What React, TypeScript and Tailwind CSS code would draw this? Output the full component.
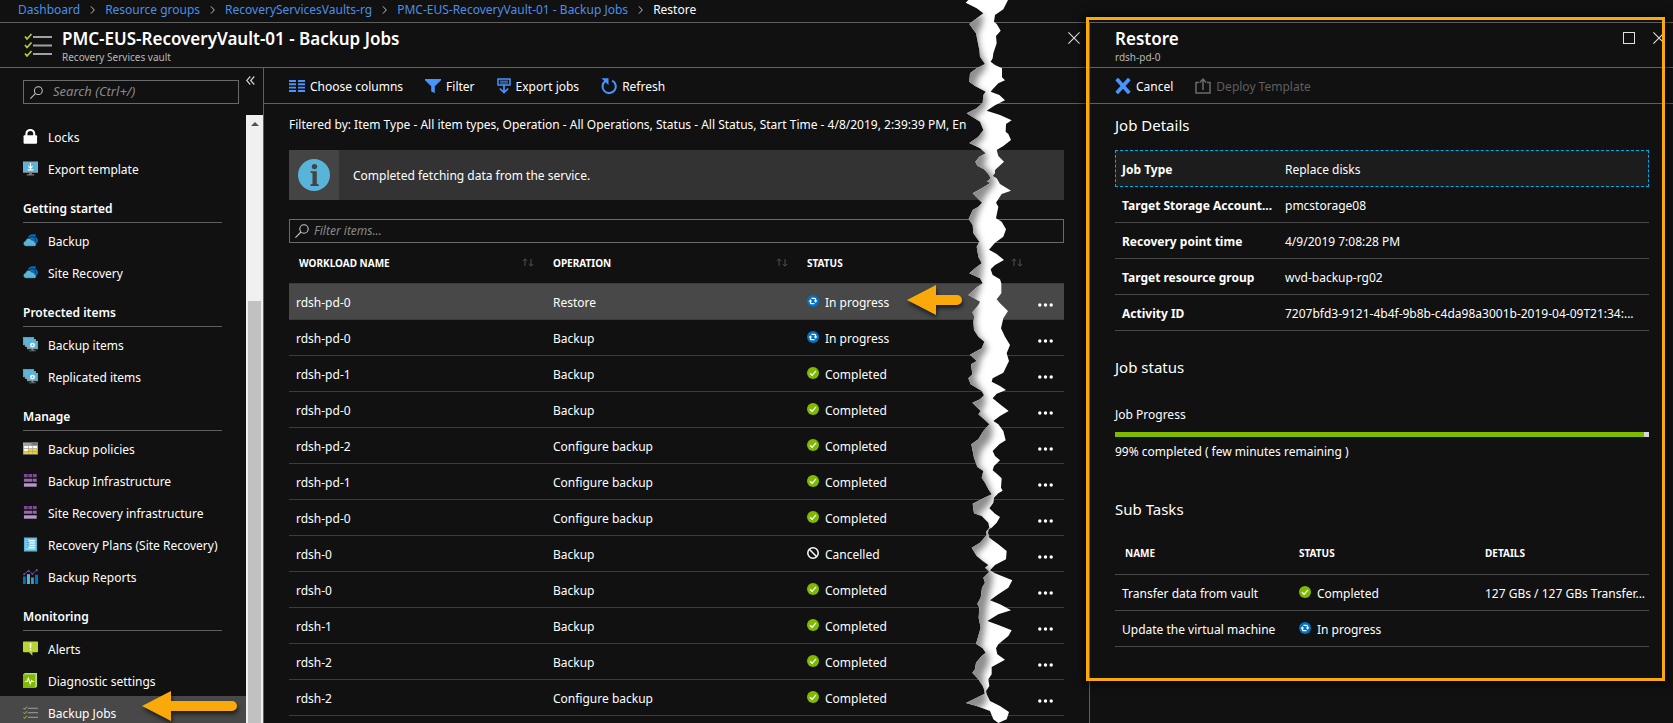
import type { ReactNode } from "react";

type IconProps = { className?: string };

/* ---------- icons ---------- */

function ChecklistIcon({ className }: IconProps) {
  return (
    <svg viewBox="0 0 28 24" className={className} fill="none" aria-hidden="true">
      <path d="M9 4h19M9 12.500h19M9 21h19" stroke="#a0a1a2" strokeWidth="2" />
      <path d="M1 3.500l2 2.500 4.500-5M1 12l2 2.500 4.500-5M1 20.500l2 2.500 4.500-5" stroke="#b8d432" strokeWidth="1.600" />
    </svg>
  );
}

function SearchIcon({ className }: IconProps) {
  return (
    <svg viewBox="0 0 14 14" className={className} fill="none" stroke="#c8c8c8" strokeWidth="1.100" aria-hidden="true">
      <circle cx="9" cy="5" r="4.200" />
      <path d="M6 8L.4 13.600" />
    </svg>
  );
}

function LockIcon({ className }: IconProps) {
  return (
    <svg viewBox="0 0 16 16" className={className} aria-hidden="true">
      <path d="M3.600 8V5.200a4.200 4.200 0 0 1 8.400 0V8" fill="none" stroke="#fff" strokeWidth="2.200" />
      <rect x=".6" y="6.600" width="14.400" height="9" rx="1" fill="#fff" />
    </svg>
  );
}

function ExportTemplateIcon({ className }: IconProps) {
  return (
    <svg viewBox="0 0 16 16" className={className} aria-hidden="true">
      <rect x="0" y=".5" width="16" height="12" fill="#a0a1a2" />
      <rect x="1" y="1.500" width="14" height="10" fill="#59b4d9" />
      <path d="M6.500 12.500h3V14H12v1.500H4V14h2.500z" fill="#7a7a7a" />
      <path d="M8 2v5.500M5.800 5.500L8 7.800l2.200-2.300M5 9.500h6" stroke="#fff" strokeWidth="1.200" fill="none" />
    </svg>
  );
}

function CloudBackupIcon({ className }: IconProps) {
  return (
    <svg viewBox="0 0 16 16" className={className} aria-hidden="true">
      <path d="M5 5C6 2.500 8 1.200 10.500 1.300L14 1.600l-1.200 2.200C15 5 16 7 16 8.500L13.600 12 9 8z" fill="#0072c6" />
      <path d="M5.500 5.200l4-1.600 3.300 1.400 1 3.600" stroke="#111" strokeWidth=".7" fill="none" />
      <path d="M3 14.200a2.900 2.900 0 0 1-.5-5.700 3.700 3.700 0 0 1 6.800-1 3.200 3.200 0 0 1 3.400 2.600 2.100 2.100 0 0 1-.5 4.100z" fill="#59b4d9" stroke="#111" strokeWidth=".5" />
    </svg>
  );
}

function ServersIcon({ className }: IconProps) {
  return (
    <svg viewBox="0 0 16 16" className={className} aria-hidden="true">
      <rect x=".4" y=".6" width="11" height="7.600" fill="#59b4d9" stroke="#a0a1a2" strokeWidth=".8" />
      <rect x="2.400" y="2.600" width="11" height="7.600" fill="#59b4d9" stroke="#a0a1a2" strokeWidth=".8" />
      <rect x="4.600" y="4.600" width="11" height="8" fill="#59b4d9" stroke="#a0a1a2" strokeWidth=".8" />
      <path d="M9 12.800h2.400v1.500h2.400v1H6.600v-1H9z" fill="#7a7a7a" />
      <circle cx="10.100" cy="8.600" r="2.600" fill="#fff" />
      <path d="M10.100 7.200l1.300 2.300H8.800z" fill="#59b4d9" />
    </svg>
  );
}

function PolicyIcon({ className }: IconProps) {
  return (
    <svg viewBox="0 0 16 16" className={className} aria-hidden="true">
      <rect x="0" y="1.500" width="16" height="13" fill="#a0a1a2" />
      <path d="M9 1.500h7v3h-7z" fill="#7a7a7a" />
      <path d="M1.200 5.200h4v2.600h-4zM6 5.200h4v2.600H6zM1.200 8.400h4V11h-4zM10.800 5.200h4v2.600h-4z" fill="#fff" />
      <path d="M6 8.400h4V11H6zM10.800 8.400h4V11h-4zM1.200 11.600h4v2.200h-4zM6 11.600h4v2.200H6zM10.800 11.600h4v2.200h-4z" fill="#fcd116" />
    </svg>
  );
}

function InfrastructureIcon({ className }: IconProps) {
  return (
    <svg viewBox="0 0 16 16" className={className} aria-hidden="true">
      <path d="M1 1h4v3.400H1zM5.800 1h4v3.400h-4zM10.600 1h4v3.400h-4z" fill="#804998" />
      <path d="M1 6h9v3.400H1zM10.600 6h4v3.400h-4z" fill="#9a62b5" />
      <path d="M1 11h13.600v3.600H1z" fill="#b796c9" />
    </svg>
  );
}

function PlansIcon({ className }: IconProps) {
  return (
    <svg viewBox="0 0 16 16" className={className} aria-hidden="true">
      <rect x="1" y=".5" width="14" height="15" fill="#59b4d9" />
      <rect x="2.500" y="2" width="11" height="12" fill="#8fd0ea" />
      <path d="M3.500 3.500h1.600M3.500 6h1.600M3.500 8.500h1.600M3.500 11h1.600" stroke="#3a9ccb" strokeWidth="1" />
      <path d="M6 4h6.500M7 6.500h5.500M7 9h5.500M6 11.500h6.500" stroke="#fff" strokeWidth="1.100" />
      <path d="M4.500 5.200l2 1.300M4.500 8l2 1" stroke="#3a8fb7" strokeWidth=".8" />
    </svg>
  );
}

function ReportsIcon({ className }: IconProps) {
  return (
    <svg viewBox="0 0 16 16" className={className} aria-hidden="true">
      <path d="M0 8h3v8H0zM12.900 6H16v10h-3.100z" fill="#0072c6" />
      <path d="M4.200 5.500h3.200V16H4.200z" fill="#59b4d9" />
      <path d="M8.600 9h3v7h-3z" fill="#3999c6" />
      <path d="M1 5.500l5-3.700 4 3.500L14.800 1" stroke="#804998" strokeWidth="1" fill="none" />
      <g fill="#804998">
        <circle cx="1.200" cy="5.500" r="1.100" />
        <circle cx="6" cy="1.800" r="1.100" />
        <circle cx="10" cy="5.300" r="1.100" />
        <circle cx="14.800" cy="1.200" r="1.100" />
      </g>
    </svg>
  );
}

function AlertIcon({ className }: IconProps) {
  return (
    <svg viewBox="0 0 16 16" className={className} aria-hidden="true">
      <path d="M.8.500h14.400q.8 0 .8.800v10q0 .8-.8.800H10V15.600L6.500 12.100H.8q-.8 0-.8-.8v-10Q0 .5.800.500z" fill="#b8d432" />
      <path d="M7.100 2h1.900l-.3 5.600H7.400zM7.200 8.500h1.700v1.700H7.200z" fill="#fff" />
    </svg>
  );
}

function DiagnosticIcon({ className }: IconProps) {
  return (
    <svg viewBox="0 0 16 16" className={className} aria-hidden="true">
      <path d="M0 1.500L2 0h13v14.500L13 16H0z" fill="#b5d98f" />
      <path d="M0 1.500h13V16H0z" fill="#7fba00" />
      <path d="M2 9h2.300l1.400-3.400 2 5.800 1.600-3.400 .8 1H12" stroke="#fff" strokeWidth="1.200" fill="none" />
    </svg>
  );
}

function ColumnsIcon({ className }: IconProps) {
  return (
    <svg viewBox="0 0 16 12" className={className} aria-hidden="true">
      <path d="M0 1h7M9 1h7M0 4.300h7M9 4.300h7M0 7.600h7M9 7.600h7M0 11h7M9 11h7" stroke="#4894fe" strokeWidth="1.900" />
    </svg>
  );
}

function FilterIcon({ className }: IconProps) {
  return (
    <svg viewBox="0 0 16 14" className={className} aria-hidden="true">
      <path d="M0 0h16v1.200L9.800 7.300V14L6.200 12.500V7.300L0 1.200z" fill="#4894fe" />
    </svg>
  );
}

function ExportIcon({ className }: IconProps) {
  return (
    <svg viewBox="0 0 14 16" className={className} fill="none" stroke="#4894fe" aria-hidden="true">
      <path d="M1 1h12v6H1z" strokeWidth="1.500" />
      <path d="M3 3.200h8M3 5h8" strokeWidth="1" />
      <path d="M7 7v7.500M2.800 10.500L7 14.600l4.200-4.100" strokeWidth="1.700" />
    </svg>
  );
}

function RefreshIcon({ className }: IconProps) {
  return (
    <svg viewBox="0 0 16 16" className={className} aria-hidden="true">
      <path d="M11.200 2.600a6.600 6.600 0 1 1-6.900.5" fill="none" stroke="#4894fe" strokeWidth="2" />
      <path d="M.5 .3h7v6.800L5.300 5z" fill="#4894fe" />
    </svg>
  );
}

function DeployIcon({ className }: IconProps) {
  return (
    <svg viewBox="0 0 16 16" className={className} fill="none" stroke="#6a6a6a" strokeWidth="1.500" aria-hidden="true">
      <path d="M4 4.500H1V15h14V4.500h-3" />
      <path d="M8 12V1.500M4.800 4.500L8 1.200l3.200 3.300" />
    </svg>
  );
}

function CancelIcon({ className }: IconProps) {
  return (
    <svg viewBox="0 0 14 14" className={className} aria-hidden="true">
      <path d="M1.500 .8l11 12.400M12.500 .8l-11 12.400" stroke="#4894fe" strokeWidth="3.200" />
    </svg>
  );
}

function CloseIcon({ className }: IconProps) {
  return (
    <svg viewBox="0 0 12 12" className={className} aria-hidden="true">
      <path d="M.4.4l11.200 11.200M11.600.4L.4 11.600" stroke="#e0e0e0" strokeWidth="1.100" />
    </svg>
  );
}

function InfoIcon({ className }: IconProps) {
  return (
    <svg viewBox="0 0 32 32" className={className} aria-hidden="true">
      <circle cx="16" cy="16" r="16" fill="#59b4d9" />
      <circle cx="16.500" cy="7.600" r="2.700" fill="#444" />
      <path d="M12.500 12.200h6.300v12.600l1.900.6V27h-8.200v-1.600l2-.6V14.200l-2-.5z" fill="#444" />
    </svg>
  );
}

function SortIcon({ className }: IconProps) {
  return (
    <svg viewBox="0 0 12 9" className={className} fill="none" stroke="#505050" aria-hidden="true">
      <path d="M3 8V1M.8 3L3 .8 5.200 3M9 1v7M6.800 6L9 8.200 11.200 6" />
    </svg>
  );
}

type Status = "In progress" | "Completed" | "Cancelled";

function StatusIcon({ status }: { status: Status }) {
  if (status === "Completed") {
    return (
      <svg viewBox="0 0 12 12" className="size-3 shrink-0" aria-hidden="true">
        <circle cx="6" cy="6" r="6" fill="#7fba00" />
        <path d="M3 6.200l2.100 2.200L9 3.900" stroke="#fff" strokeWidth="1.300" fill="none" />
      </svg>
    );
  }
  if (status === "Cancelled") {
    return (
      <svg viewBox="0 0 12 12" className="size-3 shrink-0" fill="none" stroke="#fff" strokeWidth="1.500" aria-hidden="true">
        <circle cx="6" cy="6" r="5.200" />
        <path d="M2.300 2.300l7.400 7.400" />
      </svg>
    );
  }
  return (
    <svg viewBox="0 0 12 12" className="size-3 shrink-0" aria-hidden="true">
      <circle cx="6" cy="6" r="6" fill="#0072c6" />
      <path d="M4.500 3.300h2.800a1.300 1.300 0 0 1 1.300 1.300v1.500M7.500 8.700H4.700a1.300 1.300 0 0 1-1.300-1.300V5.800" stroke="#fff" strokeWidth="1.300" fill="none" />
      <path d="M6.800 5.500h3.700L8.600 7.700zM1.500 6.500h3.700L3.400 4.300z" fill="#fff" />
    </svg>
  );
}

/* ---------- annotations ---------- */

function Arrow({ className, length }: { className: string; length: number }) {
  const end = length - 5;
  return (
    <svg
      width={length}
      height="30"
      viewBox={`0 0 ${length} 30`}
      className={`pointer-events-none absolute overflow-visible drop-shadow-[1px_3px_2px_rgba(0,0,0,0.6)] ${className}`}
      aria-hidden="true"
    >
      <path d={`M0 15L29 0v10h${end - 29}a5 5 0 0 1 0 10H29v10z`} fill="#f9a90a" />
    </svg>
  );
}

const TEAR =
  "M85 0H204L190 28 165 45 162 65 170 72 182 92 168 108 170 130 160 160 158 175 152 185 165 195 186 205 186 232 195 241 175 250 158 268 152 275 178 285 195 301 165 316 140 332 180 345 215 361 198 372 197 395 205 402 213 420 190 438 170 450 175 468 192 485 165 510 165 520 158 528 170 535 180 552 213 572 185 582 168 608 175 620 168 655 185 665 198 688 190 710 165 728 147 749 170 762 192 780 165 795 152 808 158 825 180 838 184 850 184 880 170 898 180 910 204 933 190 955 183 985 195 1010 210 1035 200 1060 207 1083 190 1118 158 1135 155 1145 180 1158 198 1170 170 1181 158 1195 180 1213 206 1233 180 1248 160 1263 175 1273 190 1293 197 1321 178 1333 158 1353 165 1368 180 1381 162 1398 158 1411 172 1423 185 1435 183 1463 188 1472 175 1480 162 1493 160 1508 148 1525 165 1541 180 1551 170 1568 155 1583 146 1588 144 1598 148 1613 175 1633 200 1653 198 1678 165 1695 150 1711 165 1720 217 1741 205 1763 175 1783 150 1801 180 1813 213 1831 175 1843 142 1863 175 1875 215 1891 205 1908 175 1933 168 1945 172 1963 195 1979 155 2001 155 2023 145 2038 148 2058 138 2073 140 2083 150 2103 180 2118 207 2136 200 2158 175 2169 160 2158 150 2133 110 2118 78 2109 110 2093 134 2081 132 2068 128 2058 115 2038 97 2018 105 2008 108 1988 125 1968 137 1958 128 1945 108 1931 115 1908 122 1883 116 1853 118 1823 112 1811 122 1793 126 1763 135 1748 130 1733 148 1715 135 1703 145 1695 128 1683 110 1668 95 1643 120 1628 140 1605 138 1595 148 1583 145 1568 125 1548 102 1540 98 1511 130 1495 155 1483 145 1468 135 1448 125 1433 130 1413 112 1401 102 1373 94 1333 115 1318 130 1293 148 1273 138 1263 115 1243 122 1233 97 1208 120 1198 132 1186 125 1173 92 1153 85 1135 97 1123 93 1093 110 1083 90 1064 125 1045 133 1025 115 1010 102 990 100 965 103 950 97 937 115 915 120 905 85 885 110 862 128 850 120 835 88 820 105 805 125 790 115 770 110 740 118 725 100 700 98 675 86 657 98 630 115 620 126 608 98 580 125 565 152 548 140 545 152 535 145 522 132 508 112 497 106 485 118 470 137 460 120 445 88 429 115 410 130 390 120 365 80 340 110 325 128 308 130 285 137 275 105 258 88 245 90 220 110 205 135 192 120 170 118 150 112 120 108 100 88 72 110 55 130 40 110 25 77 8z";

const TEAR_SHADE =
  "M0 45L130 45Q128 80 114 100Q116 160 140 195Q134 215 116 230Q104 250 112 270L135 275Q144 300 136 320Q118 345 100 355L118 365Q140 390 130 415L105 440 140 462Q142 480 130 495L155 520Q172 545 155 565Q130 590 125 615Q108 650 104 680L118 725Q128 750 128 775Q130 800 125 825L122 850Q120 880 108 890L110 910Q114 930 106 965L115 1010Q145 1030 140 1050Q115 1080 118 1100L104 1135 135 1190Q142 1210 122 1235L155 1275Q162 1300 148 1325Q112 1350 118 1400L132 1412Q138 1440 160 1490Q146 1520 115 1545L146 1585 150 1610Q140 1640 104 1665L140 1700 158 1720Q158 1750 146 1790 136 1830 136 1870 132 1910 125 1945L145 1960Q152 1990 130 2020L130 2050 140 2090Q144 2110 120 2125L0 2169z";

function TornEdge() {
  return (
    <svg
      viewBox="0 0 360 2169"
      width="120"
      height="723"
      className="pointer-events-none absolute top-0 right-[29px]"
      aria-hidden="true"
    >
      <defs>
        <clipPath id="tear-shape">
          <path d={TEAR} />
        </clipPath>
        <filter id="tear-soft" x="-20%" y="-5%" width="140%" height="110%">
          <feGaussianBlur stdDeviation="9" />
        </filter>
      </defs>
      <path d={TEAR} fill="#fff" />
      <g clipPath="url(#tear-shape)">
        <path d={TEAR_SHADE} fill="#8e8e8e" filter="url(#tear-soft)" />
      </g>
    </svg>
  );
}

/* ---------- data ---------- */

type NavItem = { label: string; icon: (p: IconProps) => ReactNode; active?: boolean };
type NavGroup = { title?: string; items: NavItem[] };

const navGroups: NavGroup[] = [
  {
    items: [
      { label: "Locks", icon: LockIcon },
      { label: "Export template", icon: ExportTemplateIcon },
    ],
  },
  {
    title: "Getting started",
    items: [
      { label: "Backup", icon: CloudBackupIcon },
      { label: "Site Recovery", icon: CloudBackupIcon },
    ],
  },
  {
    title: "Protected items",
    items: [
      { label: "Backup items", icon: ServersIcon },
      { label: "Replicated items", icon: ServersIcon },
    ],
  },
  {
    title: "Manage",
    items: [
      { label: "Backup policies", icon: PolicyIcon },
      { label: "Backup Infrastructure", icon: InfrastructureIcon },
      { label: "Site Recovery infrastructure", icon: InfrastructureIcon },
      { label: "Recovery Plans (Site Recovery)", icon: PlansIcon },
      { label: "Backup Reports", icon: ReportsIcon },
    ],
  },
  {
    title: "Monitoring",
    items: [
      { label: "Alerts", icon: AlertIcon },
      { label: "Diagnostic settings", icon: DiagnosticIcon },
      { label: "Backup Jobs", icon: ChecklistIcon, active: true },
    ],
  },
];

const jobs: { name: string; operation: string; status: Status }[] = [
  { name: "rdsh-pd-0", operation: "Restore", status: "In progress" },
  { name: "rdsh-pd-0", operation: "Backup", status: "In progress" },
  { name: "rdsh-pd-1", operation: "Backup", status: "Completed" },
  { name: "rdsh-pd-0", operation: "Backup", status: "Completed" },
  { name: "rdsh-pd-2", operation: "Configure backup", status: "Completed" },
  { name: "rdsh-pd-1", operation: "Configure backup", status: "Completed" },
  { name: "rdsh-pd-0", operation: "Configure backup", status: "Completed" },
  { name: "rdsh-0", operation: "Backup", status: "Cancelled" },
  { name: "rdsh-0", operation: "Backup", status: "Completed" },
  { name: "rdsh-1", operation: "Backup", status: "Completed" },
  { name: "rdsh-2", operation: "Backup", status: "Completed" },
  { name: "rdsh-2", operation: "Configure backup", status: "Completed" },
];

const details = [
  ["Job Type", "Replace disks"],
  ["Target Storage Account...", "pmcstorage08"],
  ["Recovery point time", "4/9/2019 7:08:28 PM"],
  ["Target resource group", "wvd-backup-rg02"],
  ["Activity ID", "7207bfd3-9121-4b4f-9b8b-c4da98a3001b-2019-04-09T21:34:..."],
];

const crumbs = ["Dashboard", "Resource groups", "RecoveryServicesVaults-rg", "PMC-EUS-RecoveryVault-01 - Backup Jobs"];

/* ---------- page ---------- */

function Breadcrumb() {
  return (
    <nav aria-label="Breadcrumb" className="h-[23px] border-b border-[#5f5f5f] pl-[18px]">
      <ol className="flex h-5 items-center whitespace-nowrap">
        {crumbs.map((crumb) => (
          <li key={crumb} className="flex items-center">
            <a href="#" className="text-[#4a8fe8]">
              {crumb}
            </a>
            <svg viewBox="0 0 6 10" className="mx-2.5 h-2 w-[5px]" fill="none" stroke="#c8c8c8" aria-hidden="true">
              <path d="M1 .5L5.300 5 1 9.500" strokeWidth="1.200" />
            </svg>
          </li>
        ))}
        <li aria-current="page">Restore</li>
      </ol>
    </nav>
  );
}

function Sidebar() {
  return (
    <div className="flex w-[264px] shrink-0 border-r border-[#5f5f5f]">
      <div className="min-w-0 flex-1">
        <div className="pt-3 pb-[17px] pl-[23px]">
          <label className="flex h-6 w-[216px] items-center border border-[#6a6a6a] pl-1.5">
            <SearchIcon className="size-[13px] shrink-0" />
            <input
              type="text"
              aria-label="Search"
              placeholder="Search (Ctrl+/)"
              className="ml-2.5 min-w-0 flex-1 bg-transparent text-[13px] italic outline-none placeholder:text-[#8a8a8a]"
            />
          </label>
        </div>
        <nav aria-label="Vault" className="-mt-px">
          {navGroups.map((group, i) => (
            <section key={i}>
              {group.title && (
                <h2 className="mr-[25px] ml-[23px] flex h-[39px] items-center border-b border-[#5f5f5f] pt-3 font-semibold">
                  {group.title}
                </h2>
              )}
              <ul className={group.title ? "pt-px" : ""}>
                {group.items.map(({ label, icon: Icon, active }) => (
                  <li key={label}>
                    <a
                      href="#"
                      aria-current={active ? "page" : undefined}
                      className={`flex h-8 items-center gap-2.5 pl-[23px] whitespace-nowrap ${active ? "bg-[#484848]" : ""}`}
                    >
                      <Icon className="size-[15px] shrink-0" />
                      <span className="pt-[3px]">{label}</span>
                    </a>
                  </li>
                ))}
              </ul>
            </section>
          ))}
        </nav>
      </div>
      <div className="-ml-px flex w-[17px] shrink-0 flex-col">
        <button type="button" aria-label="Collapse menu" className="flex h-[47px] items-start pt-2">
          <svg viewBox="0 0 9 9" className="size-[9px]" fill="none" stroke="#d0d0d0" aria-hidden="true">
            <path d="M4.300.5l-3.600 4 3.600 4M8.300.5l-3.600 4 3.600 4" strokeWidth="1.200" />
          </svg>
        </button>
        <div className="flex flex-1 flex-col items-center bg-[#f0f0f0]">
          <svg viewBox="0 0 8 4" className="mt-[7px] h-1 w-2" aria-hidden="true">
            <path d="M0 4l4-4 4 4z" fill="#505050" />
          </svg>
          <div className="mt-[175px] w-[13px] flex-1 bg-[#c1c1c1]" />
        </div>
      </div>
    </div>
  );
}

function ToolButton({ icon, children, disabled }: { icon: ReactNode; children: ReactNode; disabled?: boolean }) {
  return (
    <button
      type="button"
      disabled={disabled}
      className={`flex items-center gap-[5px] whitespace-nowrap ${disabled ? "text-[#5f5f5f]" : ""}`}
    >
      {icon}
      <span className="pt-[3px]">{children}</span>
    </button>
  );
}

function JobsTable() {
  return (
    <table className="w-full table-fixed border-collapse text-left">
      <colgroup>
        <col className="w-[257px]" />
        <col className="w-[254px]" />
        <col className="w-[235px]" />
        <col />
      </colgroup>
      <thead>
        <tr className="h-10 border-b border-[#3c3c3c] text-[10px]">
          {["WORKLOAD NAME", "OPERATION", "STATUS"].map((heading, i) => (
            <th key={heading} scope="col" className={`pr-3 font-bold ${i === 0 ? "pl-2.5" : "pl-[7px]"}`}>
              <span className="flex items-center justify-between">
                <span className="pt-0.5">{heading}</span>
                <SortIcon className="h-[9px] w-3" />
              </span>
            </th>
          ))}
          <td />
        </tr>
      </thead>
      <tbody>
        {jobs.map((job, i) => (
          <tr key={i} className={`h-9 border-b border-[#3c3c3c] ${i === 0 ? "bg-[#484848]" : ""}`}>
            <td className="pt-[3px] pl-[7px]">{job.name}</td>
            <td className="pt-[3px] pl-[7px]">{job.operation}</td>
            <td className="pl-[7px]">
              <span className="relative flex items-center gap-1.5">
                <StatusIcon status={job.status} />
                <span className="pt-[3px]">{job.status}</span>
                {i === 0 && <Arrow className="top-[-7px] left-[100px]" length={55} />}
              </span>
            </td>
            <td className="pl-[3px]">
              <button type="button" aria-label="More actions" className="block pt-2">
                <svg viewBox="0 0 15 4" className="h-1 w-[15px]" fill="#fff" aria-hidden="true">
                  <circle cx="1.800" cy="2" r="1.700" />
                  <circle cx="7.500" cy="2" r="1.700" />
                  <circle cx="13.200" cy="2" r="1.700" />
                </svg>
              </button>
            </td>
          </tr>
        ))}
      </tbody>
    </table>
  );
}

function JobsBlade() {
  return (
    <div className="flex min-w-0 flex-1 flex-col">
      <header className="flex h-[45px] shrink-0 items-start border-b border-[#5f5f5f] pl-6">
        <ChecklistIcon className="mt-2.5 h-6 w-7" />
        <div className="ml-2.5 flex-1">
          <h1 className="mt-1 text-[17px] leading-6 font-semibold">PMC-EUS-RecoveryVault-01 - Backup Jobs</h1>
          <p className="text-[10px] leading-3 text-[#b8b8b8]">Recovery Services vault</p>
        </div>
        <button type="button" aria-label="Close" className="mt-[9px] mr-[9px]">
          <CloseIcon className="size-3" />
        </button>
      </header>
      <div className="flex min-h-0 flex-1">
        <Sidebar />
        <main className="min-w-0 flex-1">
          <div className="flex h-9 items-center gap-[22px] border-b border-[#5f5f5f] pl-[25px]">
            <ToolButton icon={<ColumnsIcon className="h-3 w-4" />}>Choose columns</ToolButton>
            <ToolButton icon={<FilterIcon className="h-3.5 w-4" />}>Filter</ToolButton>
            <ToolButton icon={<ExportIcon className="h-4 w-3.5" />}>Export jobs</ToolButton>
            <ToolButton icon={<RefreshIcon className="size-4" />}>Refresh</ToolButton>
          </div>
          <div className="pr-[25px] pl-[25px]">
            <p className="flex h-[46px] items-center overflow-hidden pb-[5px] whitespace-nowrap">
              Filtered by: Item Type - All item types, Operation - All Operations, Status - All Status, Start Time - 4/8/2019, 2:39:39 PM, En
            </p>
            <div role="status" className="flex h-[50px] items-center bg-[#333]">
              <span className="flex size-[50px] items-center justify-center bg-[#444]">
                <InfoIcon className="size-8" />
              </span>
              <span className="pt-0.5 pl-3.5">Completed fetching data from the service.</span>
            </div>
            <label className="mt-[19px] flex h-6 items-center border border-[#6a6a6a] pl-[5px]">
              <SearchIcon className="size-3.5 shrink-0" />
              <input
                type="text"
                aria-label="Filter items"
                placeholder="Filter items..."
                className="ml-[5px] min-w-0 flex-1 bg-transparent italic outline-none placeholder:text-[#8a8a8a]"
              />
            </label>
            <JobsTable />
          </div>
        </main>
      </div>
    </div>
  );
}

function RestoreBlade() {
  return (
    <aside className="w-[584px] shrink-0 border-l border-[#5f5f5f]">
      <header className="flex h-[45px] items-start border-b border-[#5f5f5f] pl-[25px]">
        <div className="flex-1">
          <h2 className="mt-1 text-[17px] leading-6 font-semibold">Restore</h2>
          <p className="text-[10px] leading-3 text-[#b8b8b8]">rdsh-pd-0</p>
        </div>
        <button type="button" aria-label="Maximize" className="mt-[9px] size-3 border border-[#e0e0e0]" />
        <button type="button" aria-label="Close" className="mt-[9px] mr-2 ml-[18px]">
          <CloseIcon className="size-3" />
        </button>
      </header>
      <div className="flex h-9 items-center gap-[22px] border-b border-[#5f5f5f] pl-[25px]">
        <ToolButton icon={<CancelIcon className="size-4" />}>Cancel</ToolButton>
        <ToolButton disabled icon={<DeployIcon className="size-4" />}>
          Deploy Template
        </ToolButton>
      </div>
      <div className="pr-6 pl-[25px]">
        <h3 className="pt-[11px] pb-[15px] text-[15px] leading-5">Job Details</h3>
        <table className="w-full table-fixed border-separate border-spacing-0 text-left whitespace-nowrap">
          <colgroup>
            <col className="w-[163px]" />
            <col />
          </colgroup>
          <tbody>
            {details.map(([label, value], i) => (
              <tr
                key={label}
                className={
                  i === 0
                    ? "h-[37px] bg-[#1c1c1c] outline-1 -outline-offset-1 outline-[#00abec] outline-dashed"
                    : "h-9"
                }
              >
                <th scope="row" className={`pt-[3px] pl-[7px] font-bold ${i === 0 ? "" : "border-b border-[#484848]"}`}>
                  {label}
                </th>
                <td className={`pt-[3px] pl-[7px] ${i === 0 ? "" : "border-b border-[#484848]"}`}>{value}</td>
              </tr>
            ))}
          </tbody>
        </table>
        <h3 className="mt-[26px] text-[15px] leading-5">Job status</h3>
        <p className="mt-7 leading-5">Job Progress</p>
        <div
          role="progressbar"
          aria-label="Job Progress"
          aria-valuenow={99}
          aria-valuemin={0}
          aria-valuemax={100}
          className="mt-[7px] h-[5px] bg-[#d6d6d6]"
        >
          <div className="h-full bg-[#7fba00]" style={{ width: "99%" }} />
        </div>
        <p className="mt-[5px] leading-5">99% completed ( few minutes remaining )</p>
        <h3 className="mt-[37px] text-[15px] leading-5">Sub Tasks</h3>
        <table className="mt-[15px] w-full table-fixed border-collapse text-left whitespace-nowrap">
          <colgroup>
            <col className="w-[177px]" />
            <col className="w-[186px]" />
            <col />
          </colgroup>
          <thead>
            <tr className="h-10 border-b border-[#484848] text-[10px]">
              <th scope="col" className="pl-2.5 font-bold">NAME</th>
              <th scope="col" className="pl-[7px] font-bold">STATUS</th>
              <th scope="col" className="pl-[7px] font-bold">DETAILS</th>
            </tr>
          </thead>
          <tbody>
            <tr className="h-9 border-b border-[#484848]">
              <td className="pt-[3px] pl-[7px]">Transfer data from vault</td>
              <td className="pl-[7px]">
                <span className="flex items-center gap-1.5">
                  <StatusIcon status="Completed" />
                  <span className="pt-[3px]">Completed</span>
                </span>
              </td>
              <td className="pt-[3px] pl-[7px]">127 GBs / 127 GBs Transfer...</td>
            </tr>
            <tr className="h-9 border-b border-[#484848]">
              <td className="pt-[3px] pl-[7px]">Update the virtual machine</td>
              <td className="pl-[7px]">
                <span className="flex items-center gap-1.5">
                  <StatusIcon status="In progress" />
                  <span className="pt-[3px]">In progress</span>
                </span>
              </td>
              <td />
            </tr>
          </tbody>
        </table>
      </div>
    </aside>
  );
}

export default function App() {
  return (
    <div className="relative flex h-screen min-w-[1500px] flex-col overflow-hidden bg-[#111] font-['Noto_Sans',sans-serif] text-xs text-white">
      <Breadcrumb />
      <div className="flex min-h-0 flex-1">
        <JobsBlade />
        <RestoreBlade />
      </div>
      <div className="pointer-events-none absolute inset-y-0 left-0 right-[584px]">
        <TornEdge />
        <Arrow className="top-[691px] left-[142px]" length={95} />
      </div>
      <div className="pointer-events-none absolute top-[17px] right-2 h-[664px] w-[579px] border-3 border-[#f9a90a] shadow-[0_0_8px_3px_rgba(0,0,0,0.6)]" />
    </div>
  );
}
